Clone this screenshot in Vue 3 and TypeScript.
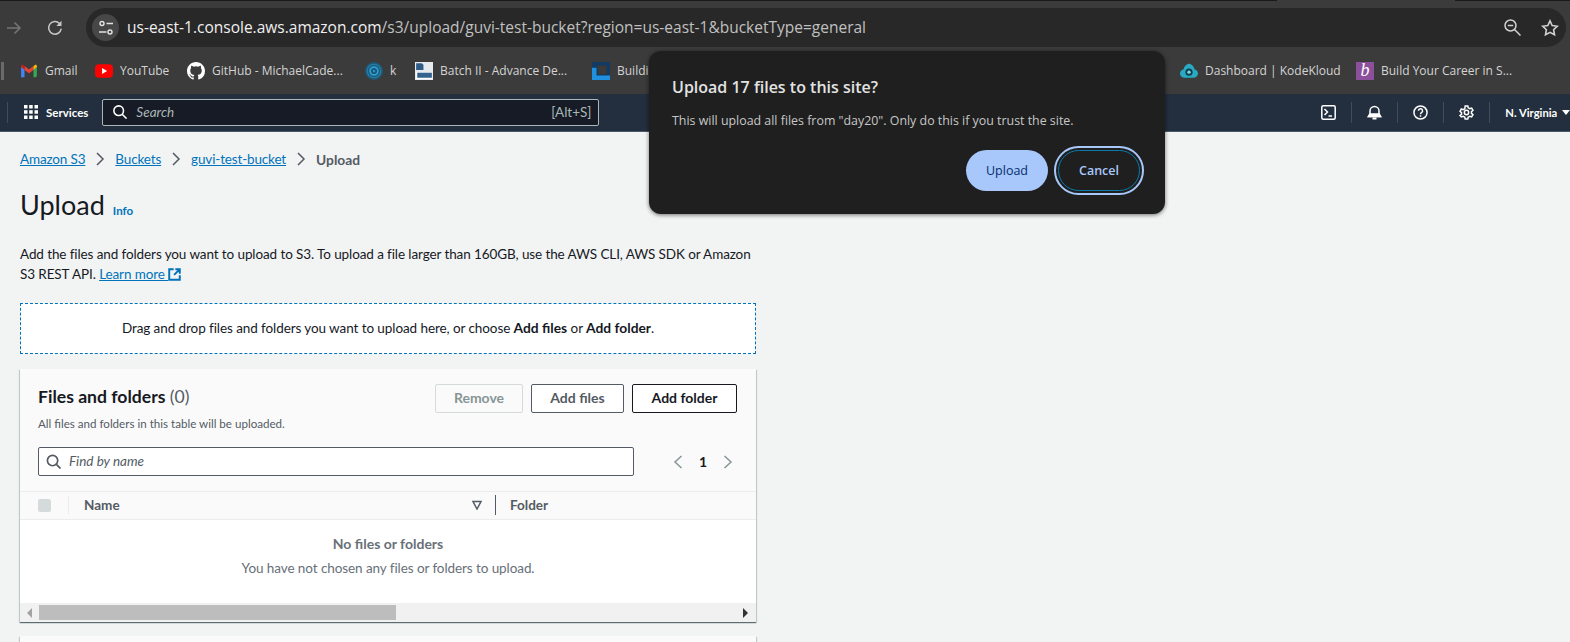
<template>
  <div class="page">
    <div class="tabstrip"></div>

    <div class="toolbar">
      <svg class="fwd" width="16" height="16" viewBox="0 0 16 16"><path d="M1 8h13M8.500 2.500L14 8l-5.500 5.500" fill="none" stroke="#757575" stroke-width="1.500" /></svg>
      <svg class="reload" width="16" height="16" viewBox="0 0 16 16"><path d="M14.200 8.700A6.300 6.300 0 1 1 12.500 3.500" fill="none" stroke="#c7c7c7" stroke-width="1.500" /><path d="M14.500 .8v5.200H9.300z" fill="#c7c7c7" /></svg>
      <div class="omnibox">
        <span class="tune">
          <svg width="16" height="16" viewBox="0 0 16 16" fill="none" stroke="#e3e3e3" stroke-width="1.400"><circle cx="4" cy="3.500" r="2" /><path d="M8.500 3.500h6.500M1 12h7.500" /><circle cx="12" cy="12" r="2" /></svg>
        </span>
        <div class="url"><span class="host">us-east-1.console.aws.amazon.com</span>/s3/upload/guvi-test-bucket?region=us-east-1&amp;bucketType=general</div>
        <svg class="zoom-ic" width="17" height="17" viewBox="0 0 17 17" fill="none" stroke="#d0d0d0" stroke-width="1.500"><circle cx="6.500" cy="6.500" r="5.500" /><path d="M10.500 10.500l6 6M3.800 6.500h5.400" /></svg>
        <svg class="star" width="18" height="18" viewBox="0 0 18 18"><path d="M9 1.800l2.200 4.700 5.100.7-3.700 3.500.9 5.100L9 13.300l-4.500 2.500.9-5.100L1.700 7.200l5.100-.7z" fill="none" stroke="#d0d0d0" stroke-width="1.600" /></svg>
      </div>
    </div>

    <div class="bookmarks">
      <span class="bm-sep"></span>
      <div class="bm" v-for="b in marks" :key="b.label" :style="{ width: b.width + 'px' }">
        <svg v-if="b.icon === 'gmail'" width="18" height="18" viewBox="0 0 16 16"><path d="M1 13.500V4l3 2.500v7H2.200A1.200 1.200 0 0 1 1 13.500z" fill="#4285f4" /><path d="M15 13.500V4l-3 2.500v7h1.800a1.200 1.200 0 0 0 1.200-1.200z" fill="#34a853" /><path d="M4 7V3.600L8 6.600l4-3V7L8 10z" fill="#ea4335" /><path d="M1 4.500V3.700c0-1 1.100-1.500 1.900-.9L4 3.600V6.800z" fill="#c5221f" /><path d="M12 3.600l1.100-.8c.8-.6 1.900-.1 1.900.9v.8L12 6.800z" fill="#fbbc04" /></svg>
        <svg v-else-if="b.icon === 'youtube'" width="18" height="18" viewBox="0 0 16 16"><rect y="2" width="16" height="12" rx="3.500" fill="#f00" /><path d="M6.300 5.400v5.200L10.800 8z" fill="#fff" /></svg>
        <svg v-else-if="b.icon === 'github'" width="18" height="18" viewBox="0 0 16 16"><path fill="#fff" d="M8 0C3.580 0 0 3.580 0 8c0 3.540 2.290 6.530 5.470 7.590.4.070.55-.17.55-.38 0-.19-.01-.82-.01-1.490-2.010.37-2.530-.49-2.690-.94-.09-.23-.48-.94-.82-1.130-.28-.15-.68-.52-.01-.53.63-.01 1.080.58 1.230.82.720 1.210 1.870.87 2.330.66.070-.52.280-.87.510-1.070-1.780-.2-3.640-.89-3.640-3.950 0-.87.310-1.590.820-2.150-.08-.2-.36-1.020.08-2.120 0 0 .67-.21 2.200.82a7.600 7.600 0 0 1 4 0c1.530-1.040 2.200-.82 2.200-.82.440 1.100.160 1.920.08 2.120.51.560.82 1.270.82 2.150 0 3.070-1.870 3.750-3.650 3.950.29.250.54.730.54 1.480 0 1.070-.01 1.930-.01 2.200 0 .21.150.46.550.38A8.010 8.010 0 0 0 16 8c0-4.420-3.580-8-8-8z" /></svg>
        <svg v-else-if="b.icon === 'k'" width="18" height="18" viewBox="0 0 16 16" fill="none"><circle cx="8" cy="8" r="8" fill="#1c5a78" /><circle cx="8" cy="8" r="6" stroke="#2a7fa8" stroke-width="1" /><circle cx="8" cy="8" r="3.500" stroke="#2b9fd6" stroke-width="1.500" /><circle cx="8" cy="8" r="1" fill="#2b9fd6" /></svg>
        <svg v-else-if="b.icon === 'batch'" width="18" height="18" viewBox="0 0 16 16"><rect width="16" height="16" fill="#e6e9ee" /><path d="M1 1h5l1.500 1.500V7H1z" fill="#2e5a88" /><path d="M1 9h14v6H1z" fill="#fff" /><rect x="2" y="9.500" width="13" height="4.500" fill="#33628f" /></svg>
        <svg v-else-if="b.icon === 'build'" width="18" height="18" viewBox="0 0 16 16"><rect width="16" height="16" fill="#123a63" /><rect x="5" y="3" width="8" height="8" fill="#3a3a3a" /><path d="M0 16V5h4v7h12v4z" fill="#1f8fe0" /></svg>
        <svg v-else-if="b.icon === 'kode'" width="18" height="18" viewBox="0 0 16 16"><path d="M0 10.500a4 4 0 0 1 3-3.900C4 3.500 6 1.500 8 1.500s4.200 2 5 5.100a4 4 0 0 1 3 3.900c0 2-2 3.500-4 3.500H4c-2 0-4-1.500-4-3.500z" fill="#2aa9c4" /><circle cx="8" cy="9" r="3.200" fill="#0e3f4d" /><circle cx="8" cy="9" r="1.500" fill="#7fd8e8" /></svg>
        <span v-else class="hv">b</span>
        <span>{{ b.label }}</span>
      </div>
    </div>

    <nav class="aws-nav">
      <span class="nav-sep first"></span>
      <svg class="grid-ic" width="14" height="14" viewBox="0 0 14 14" fill="#fff"><rect width="3.500" height="3.500" /><rect x="5.200" width="3.500" height="3.500" /><rect x="10.500" width="3.500" height="3.500" /><rect y="5.200" width="3.500" height="3.500" /><rect x="5.200" y="5.200" width="3.500" height="3.500" /><rect x="10.500" y="5.200" width="3.500" height="3.500" /><rect y="10.500" width="3.500" height="3.500" /><rect x="5.200" y="10.500" width="3.500" height="3.500" /><rect x="10.500" y="10.500" width="3.500" height="3.500" /></svg>
      <span class="services">Services</span>
      <div class="nav-search">
        <svg width="14" height="14" viewBox="0 0 16 16" fill="none" stroke="#fff" stroke-width="1.800"><circle cx="6.500" cy="6.500" r="5.500" /><path d="M10.500 10.500l5 5" /></svg>
        <span class="ph">Search</span>
        <span class="kbd">[Alt+S]</span>
      </div>
      <div class="nav-right">
        <svg width="15" height="15" viewBox="0 0 15 15" fill="none" stroke="#fff" stroke-width="1.500"><rect x=".8" y=".8" width="13.400" height="13.400" rx="1.500" /><path d="M3.500 4l3 3-3 3M7.500 11h3.500" /></svg>
        <span class="nav-sep"></span>
        <svg width="15" height="15" viewBox="0 0 15 15" fill="#fff" stroke="#fff" stroke-width="1.500"><path d="M1.500 11.500h12L12 9V6a4.500 4.500 0 0 0-9 0v3z" fill="none" /><path d="M1.500 11.500h12L12 9H3z" /><path d="M5.500 13.500h4" fill="none" stroke-width="2" /></svg>
        <span class="nav-sep"></span>
        <svg width="15" height="15" viewBox="0 0 16 16" fill="none" stroke="#fff" stroke-width="1.600"><circle cx="8" cy="8" r="7" /><path d="M5.800 6.200a2.200 2.200 0 1 1 3.300 1.900c-.7.400-1.100.9-1.100 1.700M8 10.800v1.700" /></svg>
        <span class="nav-sep"></span>
        <svg width="15" height="15" viewBox="0 0 16 16" fill="none" stroke="#fff" stroke-width="1.600"><circle cx="8" cy="8" r="2.300" /><path d="M6.600 1h2.800l.4 2 1.700 1 2-.7 1.400 2.500-1.600 1.300v1.800l1.600 1.300-1.400 2.500-2-.7-1.700 1-.4 2H6.600l-.4-2-1.700-1-2 .7L1.100 11.200l1.600-1.300V8.100L1.100 6.800l1.400-2.500 2 .7 1.700-1z" /></svg>
        <span class="nav-sep"></span>
        <span class="region">N. Virginia</span>
        <span class="caret"></span>
      </div>
    </nav>

    <main class="content">
      <div class="crumbs">
        <a>Amazon S3</a>
        <svg class="chev" width="16" height="16" viewBox="0 0 16 16"><path d="M5 2l6 6-6 6" fill="none" stroke="#545b64" stroke-width="1.500" /></svg>
        <a>Buckets</a>
        <svg class="chev" width="16" height="16" viewBox="0 0 16 16"><path d="M5 2l6 6-6 6" fill="none" stroke="#545b64" stroke-width="1.500" /></svg>
        <a>guvi-test-bucket</a>
        <svg class="chev" width="16" height="16" viewBox="0 0 16 16"><path d="M5 2l6 6-6 6" fill="none" stroke="#545b64" stroke-width="1.500" /></svg>
        <b>Upload</b>
      </div>

      <div class="title-row">
        <h1>Upload</h1>
        <span class="info">Info</span>
      </div>

      <p class="desc">
        Add the files and folders you want to upload to S3. To upload a file larger than 160GB, use the AWS CLI, AWS SDK or Amazon<br />
        S3 REST API.
        <a>Learn more&nbsp;<svg width="13" height="13" viewBox="0 0 16 16" fill="none" stroke="#0073bb" stroke-width="2.400"><path d="M7 1.500H1.500v13h13V9M9 1.500h5.500V7M14 2L7.500 8.500" /></svg></a>
      </p>

      <div class="dropzone">
        <span>Drag and drop files and folders you want to upload here, or choose <b>Add files</b> or <b>Add folder</b>.</span>
      </div>

      <section class="card">
        <header class="card-head">
          <div class="head-row">
            <div>
              <h2>Files and folders <span class="count">(0)</span></h2>
              <div class="sub">All files and folders in this table will be uploaded.</div>
            </div>
            <div class="actions">
              <button class="btn disabled">Remove</button>
              <button class="btn">Add files</button>
              <button class="btn dark">Add folder</button>
            </div>
          </div>
          <div class="filter-row">
            <div class="filter">
              <svg width="15" height="15" viewBox="0 0 16 16" fill="none" stroke="#545b64" stroke-width="1.800"><circle cx="7" cy="7" r="5.500" /><path d="M11 11l4.500 4.500" /></svg>
              <span>Find by name</span>
            </div>
            <div class="pager">
              <svg width="10" height="16" viewBox="0 0 10 16"><path d="M8.500 2L2 8l6.500 6" fill="none" stroke="#879596" stroke-width="1.500" /></svg>
              <b>1</b>
              <svg width="10" height="16" viewBox="0 0 10 16"><path d="M1.500 2L8 8l-6.500 6" fill="none" stroke="#879596" stroke-width="1.500" /></svg>
            </div>
          </div>
        </header>

        <div class="thead">
          <span class="check-cell"><i></i></span>
          <span class="th-name">Name
            <svg width="10" height="10" viewBox="0 0 10 10"><path d="M1 1.500h8L5 9z" fill="none" stroke="#545b64" stroke-width="1.500" /></svg>
          </span>
          <span class="th-folder">Folder</span>
        </div>

        <div class="empty">
          <b>No files or folders</b>
          <span>You have not chosen any files or folders to upload.</span>
        </div>

        <div class="scrollbar">
          <span class="arrow left"></span>
          <span class="thumb"></span>
          <span class="arrow right"></span>
        </div>
      </section>

      <section class="card next"></section>
    </main>

    <div class="dialog">
      <div class="dlg-title">Upload 17 files to this site?</div>
      <div class="dlg-text">This will upload all files from "day20". Only do this if you trust the site.</div>
      <div class="dlg-actions">
        <button class="dlg-upload">Upload</button>
        <button class="dlg-cancel">Cancel</button>
      </div>
    </div>
  </div>
</template>

<script setup lang="ts">
interface Mark {
  label: string
  icon: string
  width: number
}

const marks: Mark[] = [
  { label: 'Gmail', icon: 'gmail', width: 75 },
  { label: 'YouTube', icon: 'youtube', width: 92 },
  { label: 'GitHub - MichaelCade...', icon: 'github', width: 178 },
  { label: 'k', icon: 'k', width: 50 },
  { label: 'Batch II - Advance De...', icon: 'batch', width: 177 },
  { label: 'Building', icon: 'build', width: 588 },
  { label: 'Dashboard | KodeKloud', icon: 'kode', width: 176 },
  { label: 'Build Your Career in S...', icon: 'hv', width: 170 }
]
</script>

<style>
html,
body {
  margin: 0;
  overflow: hidden;
  background: #f2f3f3;
}
</style>

<style scoped>
.page {
  position: relative;
  width: 1570px;
  height: 642px;
  overflow: hidden;
  font-family: 'Lato', 'Liberation Sans', sans-serif;
  background: #f2f3f3;
}

.tabstrip {
  height: 1px;
  background: linear-gradient(90deg, #1a1a1a 1277px, #3b3b3b 1277px, #3b3b3b 1455px, #1a1a1a 1455px);
}

.toolbar {
  height: 46px;
  box-sizing: border-box;
  padding: 7px 4px 0 6px;
  display: flex;
  align-items: center;
  background: #3b3b3b;
}

.reload {
  margin-left: 25px;
}

.omnibox {
  margin-left: 23px;
  flex: 1;
  height: 39px;
  border-radius: 20px;
  background: #282828;
  display: flex;
  align-items: center;
  padding: 0 7px 0 6px;
}

.tune {
  width: 27px;
  height: 27px;
  border-radius: 50%;
  background: #474747;
  display: flex;
  align-items: center;
  justify-content: center;
}

.url {
  margin-left: 8px;
  padding-bottom: 2px;
  font-size: 15.500px;
  font-family: 'Open Sans', sans-serif;
  color: #c0c0c0;
  flex: 1;
}

.host {
  color: #f0f0f0;
}

.zoom-ic {
  margin-right: 20px;
}

.bookmarks {
  height: 47px;
  background: #3b3b3b;
  display: flex;
  align-items: center;
  font-family: 'Open Sans', sans-serif;
  font-size: 12px;
  color: #d4d4d4;
}

.bm-sep {
  width: 3px;
  height: 18px;
  background: #6a6a6a;
  margin-right: 16px;
  margin-left: 1px;
}

.bm {
  display: flex;
  align-items: center;
  gap: 7px;
  white-space: nowrap;
  flex: none;
}

.hv {
  width: 18px;
  height: 18px;
  background: #8b4f9c;
  color: #fff;
  font-family: 'Liberation Serif', serif;
  font-style: italic;
  font-size: 18px;
  line-height: 17px;
  text-align: center;
}

.aws-nav {
  height: 38px;
  padding-bottom: 1px;
  background: #232f3e;
  display: flex;
  align-items: center;
  color: #fff;
  border-bottom: 1px solid #4b5867;
  box-sizing: border-box;
}

.nav-sep {
  width: 1px;
  height: 21px;
  background: #414d5c;
  flex: none;
}

.nav-sep.first {
  margin-left: 7px;
  margin-right: 16px;
}

.grid-ic {
  flex: none;
}

.services {
  font-size: 11.500px;
  font-weight: 700;
  margin-left: 8px;
  flex: none;
}

.nav-search {
  margin-left: 14px;
  width: 497px;
  height: 27px;
  box-sizing: border-box;
  background: #161b25;
  border: 1px solid #aab7b8;
  border-radius: 2px;
  display: flex;
  align-items: center;
  padding: 0 7px 0 10px;
  font-size: 13.500px;
  color: #aab7b8;
  flex: none;
}

.ph {
  margin-left: 9px;
  font-style: italic;
  flex: 1;
}

.nav-right {
  margin-left: 722px;
  display: flex;
  align-items: center;
  gap: 15px;
  flex: none;
}

.region {
  font-size: 11.200px;
  font-weight: 700;
  margin-left: 0;
}

.caret {
  width: 0;
  height: 0;
  border: 4px solid transparent;
  border-top: 5px solid #fff;
  border-bottom: 0;
  margin-left: -10px;
}

.content {
  padding-left: 20px;
  width: 736px;
  font-size: 13.500px;
  color: #16191f;
}

.crumbs {
  display: flex;
  align-items: center;
  height: 20px;
  margin-top: 17px;
  font-size: 13.500px;
  letter-spacing: -0.15px;
  gap: 7px;
}

.crumbs a,
.desc a {
  color: #0073bb;
  text-decoration: underline;
}

.crumbs b {
  color: #545b64;
  font-weight: 700;
  font-size: 13.800px;
  letter-spacing: 0;
}

.title-row {
  display: flex;
  align-items: baseline;
  gap: 8px;
  margin-top: 19px;
}

h1 {
  margin: 0;
  font-size: 27px;
  line-height: 34px;
  font-weight: 400;
}

.info {
  font-size: 11.500px;
  font-weight: 700;
  color: #0073bb;
}

.desc {
  margin: 22px 0 0;
  font-size: 13.500px;
  letter-spacing: -0.1px;
  line-height: 20px;
  white-space: nowrap;
}

.desc svg {
  vertical-align: -2px;
}

.dropzone {
  margin-top: 19px;
  height: 51px;
  padding-bottom: 2px;
  box-sizing: border-box;
  background: #fff;
  border: 1px dashed #0073bb;
  display: flex;
  align-items: center;
  justify-content: center;
  font-size: 13.500px;
  letter-spacing: -0.08px;
}

.dropzone b {
  font-size: 13.800px;
  letter-spacing: 0;
}

.card {
  margin-top: 15px;
  background: #fff;
  box-shadow: 0 1px 1px 0 rgba(0, 28, 36, 0.5), 1px 1px 1px 0 rgba(0, 28, 36, 0.12), -1px 1px 1px 0 rgba(0, 28, 36, 0.12);
}

.card.next {
  height: 30px;
  margin-top: 14px;
  background: #fafafa;
}

.card-head {
  background: #fafafa;
  padding: 15px 19px 15px 18px;
  border-bottom: 1px solid #eaeded;
}

.head-row {
  display: flex;
  justify-content: space-between;
}

h2 {
  margin: 0;
  font-size: 17.600px;
  line-height: 26px;
  font-weight: 700;
}

.count {
  font-weight: 400;
  color: #545b64;
}

.sub {
  font-size: 11.600px;
  line-height: 16px;
  margin-top: 6px;
  color: #545b64;
}

.actions {
  display: flex;
  gap: 8px;
}

.btn {
  height: 29px;
  width: 88px;
  box-sizing: border-box;
  background: #fff;
  border: 1px solid #545b64;
  border-radius: 2px;
  padding: 0 0 2px;
  font: 700 14px 'Lato', sans-serif;
  color: #545b64;
}

.btn:nth-child(2) {
  width: 93px;
}

.btn.disabled {
  background: #fafafa;
  border-color: #d5dbdb;
  color: #879596;
}

.btn.dark {
  width: 105px;
  border-color: #16191f;
  color: #16191f;
}

.filter-row {
  display: flex;
  align-items: center;
  margin-top: 15px;
}

.filter {
  width: 596px;
  height: 29px;
  padding-bottom: 1px;
  box-sizing: border-box;
  background: #fff;
  border: 1px solid #545b64;
  border-radius: 2px;
  display: flex;
  align-items: center;
  gap: 8px;
  padding-left: 7px;
  font-size: 13.500px;
  font-style: italic;
  color: #545b64;
}

.pager {
  display: flex;
  align-items: center;
  gap: 16px;
  margin-left: 39px;
  font-size: 14px;
}

.thead {
  height: 28px;
  box-sizing: border-box;
  background: #fafafa;
  border-bottom: 1px solid #eaeded;
  padding-bottom: 1px;
  display: flex;
  align-items: center;
  font-size: 13.500px;
  font-weight: 700;
  color: #545b64;
}

.check-cell {
  width: 49px;
  padding-left: 18px;
  box-sizing: border-box;
  border-right: 1px solid #eaeded;
  height: 18px;
  display: flex;
  align-items: center;
  flex: none;
}

.check-cell i {
  width: 13px;
  height: 13px;
  border-radius: 2px;
  background: #d5dbdb;
}

.th-name {
  width: 427px;
  box-sizing: border-box;
  padding: 0 13px 0 15px;
  display: flex;
  justify-content: space-between;
  align-items: center;
  border-right: 1px solid #545b64;
  height: 20px;
}

.th-folder {
  padding-left: 14px;
}

.empty {
  height: 83px;
  display: flex;
  flex-direction: column;
  align-items: center;
  gap: 8px;
  padding-top: 15px;
  box-sizing: border-box;
  font-size: 13.500px;
  letter-spacing: -0.08px;
  color: #687078;
}

.empty b {
  font-size: 14px;
  letter-spacing: 0;
}

.scrollbar {
  height: 19px;
  background: #f1f1f1;
  display: flex;
  align-items: center;
  position: relative;
}

.thumb {
  margin-left: 19px;
  width: 357px;
  height: 15px;
  background: #bdbdbd;
}

.arrow {
  position: absolute;
  width: 0;
  height: 0;
  border: 5px solid transparent;
}

.arrow.left {
  left: 7px;
  border-right: 5px solid #a3a3a3;
  border-left: 0;
}

.arrow.right {
  right: 8px;
  border-left: 5px solid #333;
  border-right: 0;
}

.dialog {
  position: absolute;
  left: 649px;
  top: 51px;
  width: 516px;
  height: 163px;
  box-sizing: border-box;
  padding: 26px 25px 0 23px;
  background: #1f1f1f;
  border-radius: 12px;
  box-shadow: 0 1px 4px rgba(0, 0, 0, 0.55);
  font-family: 'Open Sans', sans-serif;
}

.dlg-title {
  font-size: 16px;
  font-weight: 600;
  line-height: 20px;
  color: #e3e3e3;
}

.dlg-text {
  margin-top: 14px;
  font-size: 12.400px;
  line-height: 20px;
  color: #c7c7c7;
}

.dlg-actions {
  display: flex;
  justify-content: flex-end;
  gap: 10px;
  margin-top: 19px;
}

.dlg-upload,
.dlg-cancel {
  height: 41px;
  width: 82px;
  box-sizing: border-box;
  border-radius: 21px;
  border: none;
  font: 500 12.500px 'Open Sans', sans-serif;
}

.dlg-upload {
  background: #a8c7fa;
  color: #062e6f;
}

.dlg-cancel {
  background: #1f1f1f;
  color: #a8c7fa;
  font-weight: 600;
  border: 1.500px solid #0b7aa8;
  outline: 2px solid #a8c7fa;
  outline-offset: 2px;
}
</style>
